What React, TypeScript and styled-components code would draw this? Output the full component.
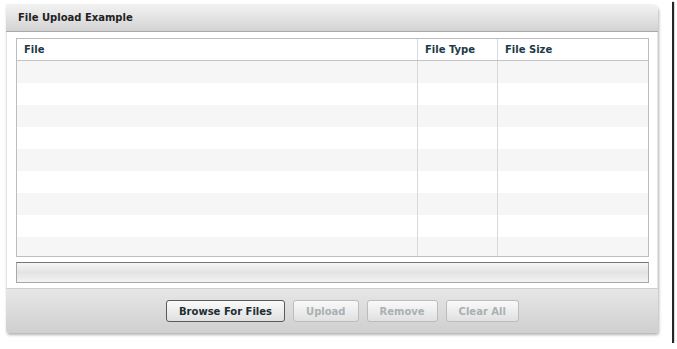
import React from "react";
import styled, { createGlobalStyle } from "styled-components";

const Global = createGlobalStyle`
  html, body { margin: 0; padding: 0; background: #fff; }
  body { font-family: "DejaVu Sans", Verdana, sans-serif; }
`;

const Frame = styled.div`
  width: 672px;
  height: 343px;
  background: #fff;
  box-shadow: 2px 2px 1px rgba(0, 0, 0, 0.85);
  padding: 4px 0 0 6px;
  box-sizing: border-box;
`;

const Panel = styled.div`
  width: 652px;
  display: flex;
  flex-direction: column;
  box-shadow: 1px 2px 3px rgba(0, 0, 0, 0.3);
  border-radius: 0 6px 3px 3px;
`;

const Header = styled.div`
  height: 27px;
  border-bottom: 1px solid #a9a9a9;
  background: linear-gradient(#f3f3f3, #d3d3d3);
  border-radius: 0 6px 0 0;
  display: flex;
  align-items: center;
  padding-left: 12px;
  font-size: 10px;
  font-weight: bold;
  color: #222;
`;

const Body = styled.div`
  background: #fff;
  padding: 6px 8px 5px 9px;
  border-left: 1px solid #e4e4e4;
  border-right: 1px solid #e4e4e4;
  display: flex;
  flex-direction: column;
  gap: 5px;
`;

const Grid = styled.div`
  border: 1px solid #bdbdbd;
  height: 217px;
  overflow: hidden;
  background: #fff;
`;

const Row = styled.div<{ $head?: boolean; $alt?: boolean }>`
  display: grid;
  grid-template-columns: 401px 80px 1fr;
  height: ${(p) => (p.$head ? "21px" : "22px")};
  background: ${(p) => (p.$head ? "#fff" : p.$alt ? "#f6f6f6" : "#fff")};
  border-bottom: ${(p) => (p.$head ? "1px solid #c4c4c4" : "none")};
`;

const Cell = styled.div<{ $last?: boolean }>`
  border-right: ${(p) => (p.$last ? "none" : "1px solid #d8d8d8")};
  display: flex;
  align-items: center;
  padding-left: 7px;
  font-size: 10px;
  font-weight: bold;
  color: #1c3a46;
`;

const Progress = styled.div`
  height: 19px;
  border: 1px solid #a8a8a8;
  border-top-color: #767676;
  background: linear-gradient(#f6f6f6, #e3e3e3 50%, #f3f3f3);
`;

const Footer = styled.div`
  height: 44px;
  border-top: 1px solid #cfcfcf;
  background: linear-gradient(#e7e7e7, #cfcfcf);
  border-radius: 0 0 3px 3px;
  display: flex;
  align-items: center;
  padding-left: 160px;
  gap: 8px;
`;

const Button = styled.button<{ $disabled?: boolean }>`
  height: 22px;
  padding: 0 12px;
  border-radius: 3px;
  border: 1px solid ${(p) => (p.$disabled ? "#bcbcbc" : "#5a5a5a")};
  background: linear-gradient(#fafafa, #e0e0e0);
  font-family: "DejaVu Sans", Verdana, sans-serif;
  font-size: 10px;
  font-weight: bold;
  color: ${(p) => (p.$disabled ? "#a9b1b3" : "#1c2d33")};
  cursor: ${(p) => (p.$disabled ? "default" : "pointer")};
`;

const columns = ["File", "File Type", "File Size"];

export default function App() {
  return (
    <>
      <Global />
      <Frame>
        <Panel>
          <Header>File Upload Example</Header>
          <Body>
            <Grid>
              <Row $head>
                {columns.map((c, i) => (
                  <Cell key={c} $last={i === 2}>
                    {c}
                  </Cell>
                ))}
              </Row>
              {Array.from({ length: 9 }).map((_, r) => (
                <Row key={r} $alt={r % 2 === 0}>
                  <Cell />
                  <Cell />
                  <Cell $last />
                </Row>
              ))}
            </Grid>
            <Progress />
          </Body>
          <Footer>
            <Button>Browse For Files</Button>
            <Button $disabled>Upload</Button>
            <Button $disabled>Remove</Button>
            <Button $disabled>Clear All</Button>
          </Footer>
        </Panel>
      </Frame>
    </>
  );
}
